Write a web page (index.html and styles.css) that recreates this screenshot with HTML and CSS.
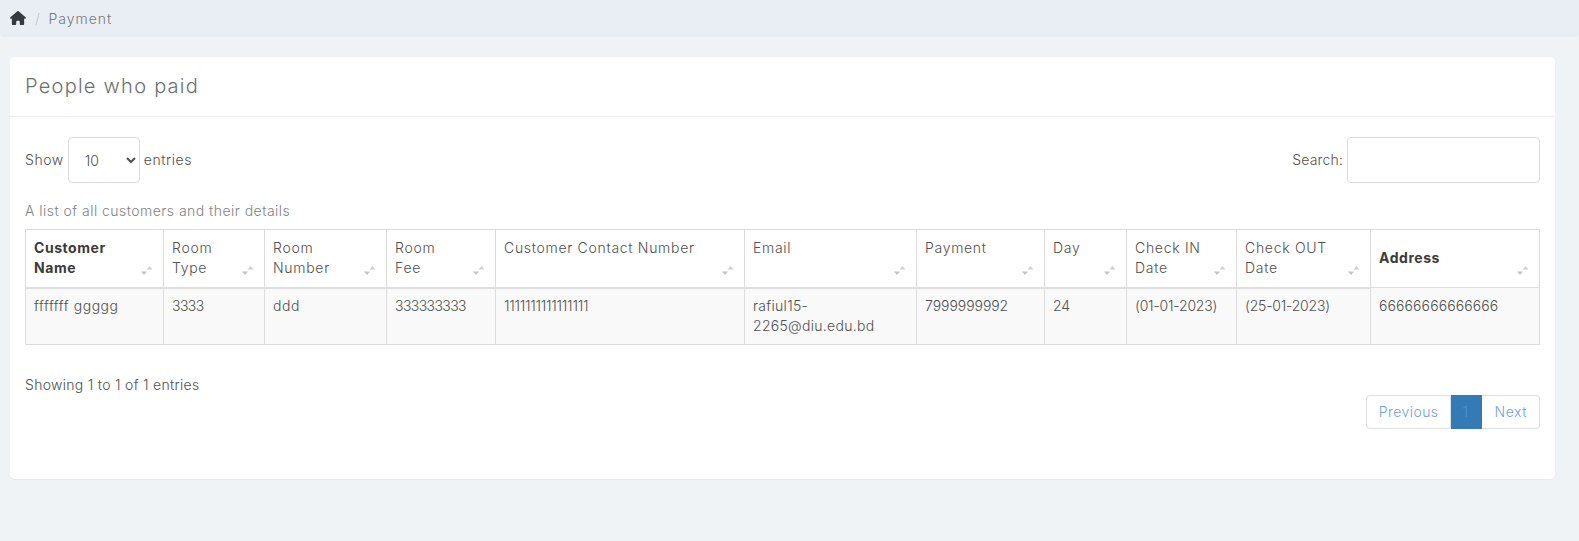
FILE: index.html
```html
<!DOCTYPE html>
<html lang="en">
<head>
<meta charset="utf-8">
<title>Payment</title>
<link rel="stylesheet" href="styles.css">
</head>
<body>
<nav class="crumbs">
  <svg class="home" viewBox="0 0 576 512"><path d="M575.8 255.5c0 18-15 32.100-32 32.100h-32l.7 160.200c0 2.700-.2 5.400-.5 8.100V472c0 22.100-17.900 40-40 40H456c-1.100 0-2.200 0-3.300-.1-1.400.1-2.800.1-4.200.1H416 392c-22.100 0-40-17.900-40-40V448 384c0-17.700-14.300-32-32-32H256c-17.700 0-32 14.300-32 32v64 24c0 22.100-17.900 40-40 40H160 128.100c-1.500 0-3-.1-4.500-.2-1.200.1-2.400.2-3.600.2H104c-22.100 0-40-17.900-40-40V360c0-.9 0-1.900.1-2.800V287.600H32c-18 0-32-14-32-32.100 0-9 3-17 10-24L266.400 8c7-7 15-8 22-8s15 2 21 7L564.800 231.500c8 7 12 15 11 24z"/></svg>
  <span class="sep">/</span>
  <span class="crumb">Payment</span>
</nav>
<main class="card">
  <h1 class="card-title">People who paid</h1>
  <div class="card-body">
    <div class="controls">
      <label class="length">Show
        <select class="field select"><option>10</option></select>
        entries</label>
      <label class="search">Search: <input class="field input" type="text"></label>
    </div>
    <table class="grid">
      <caption>A list of all customers and their details</caption>
      <thead>
        <tr>
          <th class="strong">Customer Name<svg class="sort" viewBox="0 0 13 9"><path d="M9.500 0l3 3.500h-6z" fill="#d0d0d0"/><path d="M1 5.500h6l-3 3.500z" fill="#c4c4c4"/></svg></th>
          <th>Room Type<svg class="sort" viewBox="0 0 13 9"><path d="M9.500 0l3 3.500h-6z" fill="#d0d0d0"/><path d="M1 5.500h6l-3 3.500z" fill="#c4c4c4"/></svg></th>
          <th>Room Number<svg class="sort" viewBox="0 0 13 9"><path d="M9.500 0l3 3.500h-6z" fill="#d0d0d0"/><path d="M1 5.500h6l-3 3.500z" fill="#c4c4c4"/></svg></th>
          <th>Room Fee<svg class="sort" viewBox="0 0 13 9"><path d="M9.500 0l3 3.500h-6z" fill="#d0d0d0"/><path d="M1 5.500h6l-3 3.500z" fill="#c4c4c4"/></svg></th>
          <th>Customer Contact Number<svg class="sort" viewBox="0 0 13 9"><path d="M9.500 0l3 3.500h-6z" fill="#d0d0d0"/><path d="M1 5.500h6l-3 3.500z" fill="#c4c4c4"/></svg></th>
          <th>Email<svg class="sort" viewBox="0 0 13 9"><path d="M9.500 0l3 3.500h-6z" fill="#d0d0d0"/><path d="M1 5.500h6l-3 3.500z" fill="#c4c4c4"/></svg></th>
          <th>Payment<svg class="sort" viewBox="0 0 13 9"><path d="M9.500 0l3 3.500h-6z" fill="#d0d0d0"/><path d="M1 5.500h6l-3 3.500z" fill="#c4c4c4"/></svg></th>
          <th>Day<svg class="sort" viewBox="0 0 13 9"><path d="M9.500 0l3 3.500h-6z" fill="#d0d0d0"/><path d="M1 5.500h6l-3 3.500z" fill="#c4c4c4"/></svg></th>
          <th>Check IN Date<svg class="sort" viewBox="0 0 13 9"><path d="M9.500 0l3 3.500h-6z" fill="#d0d0d0"/><path d="M1 5.500h6l-3 3.500z" fill="#c4c4c4"/></svg></th>
          <th>Check OUT Date<svg class="sort" viewBox="0 0 13 9"><path d="M9.500 0l3 3.500h-6z" fill="#d0d0d0"/><path d="M1 5.500h6l-3 3.500z" fill="#c4c4c4"/></svg></th>
          <th class="strong">Address<svg class="sort" viewBox="0 0 13 9"><path d="M9.500 0l3 3.500h-6z" fill="#d0d0d0"/><path d="M1 5.500h6l-3 3.500z" fill="#c4c4c4"/></svg></th>
        </tr>
      </thead>
      <tbody>
        <tr>
          <td>fffffff ggggg</td>
          <td class="threes">3333</td>
          <td>ddd</td>
          <td class="threes">333333333</td>
          <td class="ones">1111111111111111</td>
          <td class="mail">rafiul15-2265@diu.edu.bd</td>
          <td class="num">7999999992</td>
          <td class="num">24</td>
          <td class="date">(01-01-2023)</td>
          <td class="date">(25-01-2023)</td>
          <td class="sixes">66666666666666</td>
        </tr>
      </tbody>
    </table>
    <div class="footer">
      <div class="info">Showing 1 to 1 of 1 entries</div>
      <div class="pager">
        <a class="page first">Previous</a>
        <a class="page current">1</a>
        <a class="page last">Next</a>
      </div>
    </div>
  </div>
</main>
</body>
</html>
```
FILE: styles.css
```css
* { box-sizing: border-box; }
html, body { margin: 0; }
body {
  background: #eff3f6;
  color: #505050;
  font-family: "Inter", "Liberation Sans", sans-serif;
  font-size: 14px;
  font-weight: 300;
  letter-spacing: .55px;
  line-height: 20px;
  height: 541px;
  overflow: hidden;
}
.crumbs {
  height: 37px;
  background: #e9edf4;
  border-radius: 0 0 4px 4px;
  display: flex;
  align-items: center;
  padding: 0 10px;
  color: #76797d;
}
.home { width: 16px; height: 14px; fill: #333a40; margin-bottom: 1px; }
.sep { color: #c3c7cc; margin: 0 8px 0 9px; }
.crumb { letter-spacing: 1px; }
.card {
  margin: 20px 24px 0 10px;
  height: 422px;
  background: #fff;
  border-radius: 5px;
  box-shadow: 0 1px 1px rgba(0, 0, 0, .04);
}
.card-title {
  margin: 0;
  height: 60px;
  padding: 0 15px 2px;
  display: flex;
  align-items: center;
  font-size: 20px;
  font-weight: 300;
  letter-spacing: 1.25px;
  color: #6c6f72;
  border-bottom: 1px solid #eceef1;
}
.card-body { padding: 20px 15px 0; }
.controls {
  display: flex;
  justify-content: space-between;
  height: 46px;
}
.length, .search { display: flex; align-items: center; gap: 4px; }
.search { letter-spacing: .15px; }
.field {
  height: 46px;
  border: 1px solid #d9dadd;
  border-radius: 4px;
  background: #fff;
  color: #505050;
  font: inherit;
}
.select { width: 72px; padding: 0 8px 0 12px; }
.input { width: 193px; margin: 0; }
.grid {
  width: 1515px;
  margin-top: 20px;
  table-layout: fixed;
  border-collapse: collapse;
  border: 1px solid #d9d9d9;
}
.grid caption {
  caption-side: top;
  text-align: left;
  color: #7f8286;
  height: 26px;
  line-height: 16px;
  letter-spacing: .47px;
  padding: 0;
}
.grid th, .grid td {
  border: 1px solid #dcdcdc;
  padding: 8px;
  vertical-align: top;
  text-align: left;
}
.grid th {
  position: relative;
  height: 58px;
  font-weight: 300;
  letter-spacing: .7px;
  background: #fff;
  border-bottom: 2px solid #dedede;
  padding-right: 22px;
}
.grid th.strong { font-weight: 700; color: #3b3b3b; letter-spacing: .55px; }
.grid th:last-child { vertical-align: middle; border-bottom-width: 1px; padding-bottom: 10px; }
.grid th:nth-child(1) { width: 138px; }
.grid th:nth-child(2) { width: 101px; }
.grid th:nth-child(3) { width: 122px; }
.grid th:nth-child(4) { width: 109px; padding-right: 40px; }
.grid th:nth-child(5) { width: 249px; }
.grid th:nth-child(6) { width: 172px; }
.grid th:nth-child(7) { width: 128px; }
.grid th:nth-child(8) { width: 82px; }
.grid th:nth-child(9) { width: 110px; }
.grid th:nth-child(10) { width: 134px; }
.grid td { height: 57px; padding-top: 7px; background: #f9f9f9; }
.grid td.num { letter-spacing: -.05px; }
.grid td.threes { letter-spacing: -.6px; }
.grid td.ones { letter-spacing: -.25px; }
.grid td.mail { letter-spacing: .3px; }
.grid td.date { letter-spacing: -.2px; }
.grid td.sixes { letter-spacing: .1px; padding-top: 8px; }
.sort {
  position: absolute;
  right: 10px;
  bottom: 12px;
  width: 13px;
  height: 9px;
}
.info { padding-top: 30px; letter-spacing: .3px; }
.pager {
  display: flex;
  justify-content: flex-end;
}
.page {
  height: 34px;
  line-height: 32px;
  padding: 0 12px;
  border: 1px solid #dddfe3;
  border-left-width: 0;
  color: #6f9fe0;
  background: #fff;
}
.first { border-left-width: 1px; border-radius: 4px 0 0 4px; letter-spacing: .45px; padding-right: 11px; }
.last { border-radius: 0 4px 4px 0; padding-right: 12px; padding-left: 13px; }
.current {
  width: 31px;
  padding: 0;
  text-align: center;
  background: #337ab7;
  border-color: #337ab7;
  color: #4d94d6;
}
```
